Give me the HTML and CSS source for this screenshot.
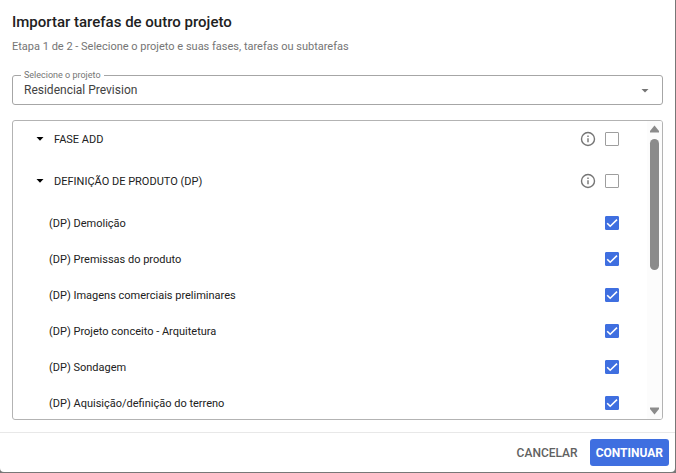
FILE: index.html
```html
<!DOCTYPE html>
<html lang="pt-BR">
<head>
    <meta charset="UTF-8">
    <meta name="viewport" content="width=device-width, initial-scale=1.0">
    <title>Importar tarefas de outro projeto</title>
    <link rel="stylesheet" href="styles.css">
</head>
<body>
    <main class="dialog">
        <header class="dialog-header">
            <h1>Importar tarefas de outro projeto</h1>
            <p>Etapa 1 de 2 - Selecione o projeto e suas fases, tarefas ou subtarefas</p>
        </header>

        <div class="field">
            <label for="project">Selecione o projeto</label>
            <select id="project">
                <option>Residencial Prevision</option>
            </select>
            <svg class="field-arrow" width="8" height="4" viewBox="0 0 8 4"><path d="M0.5 0h7L4 3.6z"/></svg>
        </div>

        <div class="tree">
            <div class="tree-content">
                <div class="row phase">
                    <svg class="caret" width="8" height="4" viewBox="0 0 8 4"><path d="M0.5 0h7L4 3.8z"/></svg>
                    <label for="phase-1">FASE ADD</label>
                    <svg class="info" width="16" height="16" viewBox="0 0 16 16"><circle cx="8" cy="8" r="6.5"/><path d="M8 7.2v4M8 4.6v1.4"/></svg>
                    <input type="checkbox" id="phase-1">
                </div>
                <div class="row phase">
                    <svg class="caret" width="8" height="4" viewBox="0 0 8 4"><path d="M0.5 0h7L4 3.8z"/></svg>
                    <label for="phase-2">DEFINIÇÃO DE PRODUTO (DP)</label>
                    <svg class="info" width="16" height="16" viewBox="0 0 16 16"><circle cx="8" cy="8" r="6.5"/><path d="M8 7.2v4M8 4.6v1.4"/></svg>
                    <input type="checkbox" id="phase-2">
                </div>
                <div class="row task">
                    <label for="task-1">(DP) Demolição</label>
                    <span class="check"><input type="checkbox" id="task-1" checked><svg viewBox="0 0 14 14"><path d="M2.2 7.2l3 3L12 3.6"/></svg></span>
                </div>
                <div class="row task">
                    <label for="task-2">(DP) Premissas do produto</label>
                    <span class="check"><input type="checkbox" id="task-2" checked><svg viewBox="0 0 14 14"><path d="M2.2 7.2l3 3L12 3.6"/></svg></span>
                </div>
                <div class="row task">
                    <label for="task-3">(DP) Imagens comerciais preliminares</label>
                    <span class="check"><input type="checkbox" id="task-3" checked><svg viewBox="0 0 14 14"><path d="M2.2 7.2l3 3L12 3.6"/></svg></span>
                </div>
                <div class="row task">
                    <label for="task-4">(DP) Projeto conceito - Arquitetura</label>
                    <span class="check"><input type="checkbox" id="task-4" checked><svg viewBox="0 0 14 14"><path d="M2.2 7.2l3 3L12 3.6"/></svg></span>
                </div>
                <div class="row task">
                    <label for="task-5">(DP) Sondagem</label>
                    <span class="check"><input type="checkbox" id="task-5" checked><svg viewBox="0 0 14 14"><path d="M2.2 7.2l3 3L12 3.6"/></svg></span>
                </div>
                <div class="row task">
                    <label for="task-6">(DP) Aquisição/definição do terreno</label>
                    <span class="check"><input type="checkbox" id="task-6" checked><svg viewBox="0 0 14 14"><path d="M2.2 7.2l3 3L12 3.6"/></svg></span>
                </div>
            </div>
            <div class="scrollbar">
                <svg width="9" height="8" viewBox="0 0 9 8"><path d="M4.5 0.5L9 6v1.5H0V6z"/></svg>
                <div class="track"><div class="thumb"></div></div>
                <svg width="9" height="8" viewBox="0 0 9 8"><path d="M4.5 7.5L9 2V0.5H0V2z"/></svg>
            </div>
        </div>

        <footer class="dialog-footer">
            <button type="button" class="btn">CANCELAR</button>
            <button type="button" class="btn btn-primary">CONTINUAR</button>
        </footer>
    </main>
</body>
</html>
```

FILE: styles.css
```css
* {
    box-sizing: border-box;
}
body {
    margin: 0;
    padding: 0 1px 1px 0;
    height: 100vh;
    background-color: #777;
    color: #212121;
    font-family: Roboto, Arial, sans-serif;
    font-size: 11px;
}
.dialog {
    display: flex;
    flex-direction: column;
    height: 100%;
    background-color: #fff;
    border-radius: 0 0 4px 4px;
}
.dialog-header {
    padding: 12px 12px 0;
}
h1 {
    margin: 0;
    font-size: 15px;
    font-weight: 500;
    line-height: 20px;
}
.dialog-header p {
    margin: 7px 0 0;
    color: #757575;
    line-height: 16px;
}

/* Outlined select */
.field {
    position: relative;
    margin: 20px 12px 0;
}
.field label {
    position: absolute;
    top: -6px;
    left: 9px;
    padding: 0 3px;
    background-color: #fff;
    color: #757575;
    font-size: 9px;
    line-height: 12px;
}
.field select {
    display: block;
    width: 100%;
    height: 30px;
    padding: 0 30px 0 11px;
    border: 1px solid #a6a6a6;
    border-radius: 3px;
    background-color: #fff;
    color: #424242;
    font-family: inherit;
    font-size: 12px;
    appearance: none;
}
.field-arrow {
    position: absolute;
    top: 14px;
    right: 14px;
    fill: #757575;
    pointer-events: none;
}

/* Phases and tasks */
.tree {
    display: flex;
    flex: 1;
    min-height: 0;
    margin: 15px 12px 12px;
    border: 1px solid #b3b3b3;
    border-radius: 3px;
    overflow: hidden;
}
.tree-content {
    flex: 1;
}
.row {
    display: flex;
    align-items: center;
    height: 36px;
    padding: 0 28px 0 36px;
}
.row label {
    flex: 1;
}
.phase {
    margin-bottom: 6px;
    padding-left: 23px;
}
.caret {
    margin-right: 10px;
}
.info {
    margin-right: 9px;
    fill: none;
    stroke: #757575;
    stroke-width: 1.4;
}
input[type="checkbox"] {
    display: block;
    width: 14px;
    height: 14px;
    margin: 0;
    border: 1px solid #9e9e9e;
    border-radius: 1px;
    background-color: #fff;
    appearance: none;
}
input[type="checkbox"]:checked {
    border-color: #3f6fe0;
    background-color: #3f6fe0;
}
.check {
    position: relative;
}
.check svg {
    position: absolute;
    inset: 0;
    fill: none;
    stroke: #fff;
    stroke-width: 1.6;
    pointer-events: none;
}
.scrollbar {
    display: flex;
    flex-direction: column;
    align-items: center;
    width: 15px;
    padding: 4px 0;
    background-color: #fcfcfc;
}
.scrollbar svg {
    fill: #8b8b8b;
}
.track {
    flex: 1;
    padding: 6px 0;
}
.thumb {
    width: 9px;
    height: 50%;
    border-radius: 5px;
    background-color: #8b8b8b;
}

.dialog-footer {
    display: flex;
    justify-content: flex-end;
    gap: 6px;
    padding: 6px;
    border-top: 1px solid #e8e8e8;
}
.btn {
    height: 27px;
    padding: 0 6px;
    border: 0;
    border-radius: 3px;
    background-color: transparent;
    color: #616161;
    font-family: inherit;
    font-size: 12px;
    font-weight: 500;
}
.btn-primary {
    background-color: #3f6fe0;
    color: #fff;
    font-weight: 700;
}
```
